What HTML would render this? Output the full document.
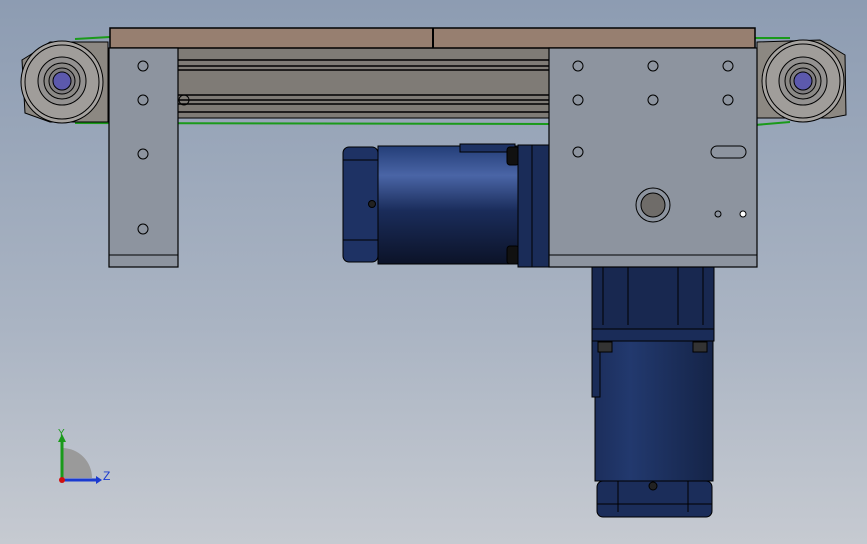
<!DOCTYPE html>
<html><head><style>
html,body{margin:0;padding:0;width:867px;height:544px;overflow:hidden}
body{background:linear-gradient(#8d9cb2,#aab4c3 60%,#c6cad1)}
svg{position:absolute;left:0;top:0}
</style></head><body>
<svg width="867" height="544" viewBox="0 0 867 544">
<defs>
<linearGradient id="mot" x1="0" y1="0" x2="0" y2="1">
<stop offset="0" stop-color="#243e78"/><stop offset="0.25" stop-color="#4a65a6"/><stop offset="0.55" stop-color="#1a2c5a"/><stop offset="1" stop-color="#0c1328"/></linearGradient>
<linearGradient id="mot2" x1="0" y1="0" x2="1" y2="0">
<stop offset="0" stop-color="#1c2e5c"/><stop offset="0.3" stop-color="#22396e"/><stop offset="1" stop-color="#152448"/></linearGradient>
</defs>
<g stroke="#000" stroke-width="1">
<!-- belt green edges -->
<path d="M75 39 L110 37 M75 123 L550 124" stroke="#1a9a1a" stroke-width="2"/>
<path d="M755 38 L790 38 M755 125 L790 122" stroke="#1a9a1a" stroke-width="2"/>
<!-- left pulley housing -->
<path d="M30 55 L50 42 L108 42 L108 122 L50 122 L25 113 L22 60Z" fill="#8c8882"/>
<circle cx="62" cy="82" r="41" fill="#a6a3a0"/>
<circle cx="62" cy="82" r="37" fill="#a09d9a"/>
<circle cx="62" cy="81" r="24" fill="#939190"/>
<circle cx="62" cy="81" r="18" fill="#8a8885"/>
<circle cx="62" cy="81" r="13" fill="#7f7d80"/>
<circle cx="62" cy="81" r="9" fill="#5c59ad"/>
<!-- right pulley housing -->
<path d="M757 42 L820 40 L845 55 L846 115 L830 118 L757 118Z" fill="#8c8882"/>
<circle cx="803" cy="81" r="41" fill="#a6a3a0"/>
<circle cx="803" cy="81" r="37" fill="#a09d9a"/>
<circle cx="803" cy="81" r="24" fill="#939190"/>
<circle cx="803" cy="81" r="18" fill="#8a8885"/>
<circle cx="803" cy="81" r="13" fill="#7f7d80"/>
<circle cx="803" cy="81" r="9" fill="#5c59ad"/>
<!-- rail -->
<rect x="178" y="48" width="372" height="70" fill="#7f7b76"/>
<path d="M178 60 H550 M178 66 H550 M178 70 H550 M178 95 H550 M178 100 H550 M178 104 H550 M178 112 H550" stroke-width="1.5"/>
<!-- top belt -->
<rect x="110" y="28" width="645" height="20" fill="#977f70" stroke-width="1.5"/>
<line x1="433" y1="28" x2="433" y2="48" stroke-width="2"/>
<!-- upper motor -->
<rect x="343" y="147" width="35" height="115" rx="6" fill="#1e3264"/>
<rect x="378" y="146" width="140" height="118" fill="url(#mot)"/>
<rect x="460" y="144" width="55" height="8" fill="#1e3264"/>
<rect x="507" y="147" width="12" height="18" rx="3" fill="#111"/>
<rect x="507" y="246" width="12" height="18" rx="3" fill="#111"/>
<rect x="518" y="145" width="32" height="122" fill="#1a2c58"/>
<line x1="532" y1="145" x2="532" y2="267"/>
<line x1="343" y1="160" x2="378" y2="160"/><line x1="343" y1="240" x2="378" y2="240"/>
<circle cx="372" cy="204" r="3.5" fill="#222"/>
<!-- left plate -->
<rect x="109" y="48" width="69" height="219" fill="#8d949f" stroke-width="1.2"/>
<line x1="109" y1="255" x2="178" y2="255"/>
<g fill="none">
<circle cx="143" cy="66" r="5"/><circle cx="143" cy="100" r="5"/><circle cx="143" cy="154" r="5"/><circle cx="143" cy="229" r="5"/>
<circle cx="184" cy="100" r="5"/>
</g>
<!-- gearbox & lower motor -->
<rect x="592" y="267" width="122" height="62" fill="#182850"/>
<path d="M603 267 V325 M628 267 V325 M678 267 V325 M703 267 V325"/>
<rect x="592" y="329" width="122" height="12" fill="#1a2c58"/>
<rect x="595" y="341" width="118" height="140" fill="url(#mot2)"/>
<rect x="592" y="341" width="8" height="56" fill="#1a2c58"/>
<rect x="598" y="342" width="14" height="10" fill="#333"/><rect x="693" y="342" width="14" height="10" fill="#333"/>
<rect x="597" y="481" width="115" height="36" rx="6" fill="#1b2d5a"/>
<line x1="597" y1="504" x2="712" y2="504"/>
<path d="M618 481 V512 M688 481 V512"/>
<circle cx="653" cy="486" r="4" fill="#222"/>
<!-- right plate -->
<rect x="549" y="48" width="208" height="219" fill="#8d949f" stroke-width="1.2"/>
<line x1="549" y1="255" x2="757" y2="255"/>
<g fill="none">
<circle cx="578" cy="66" r="5"/><circle cx="653" cy="66" r="5"/><circle cx="728" cy="66" r="5"/>
<circle cx="578" cy="100" r="5"/><circle cx="653" cy="100" r="5"/><circle cx="728" cy="100" r="5"/>
<circle cx="578" cy="152" r="5"/>
<rect x="711" y="146" width="35" height="12" rx="6"/>
<circle cx="653" cy="205" r="17"/>
<circle cx="718" cy="214" r="3"/>
</g>
<circle cx="653" cy="205" r="12" fill="#6f6c69"/>
<circle cx="743" cy="214" r="3" fill="#fff"/>
</g>
<!-- axes -->
<g>
<path d="M62 448 A30 30 0 0 1 92 478 L62 478Z" fill="#9a9a9a"/>
<line x1="62" y1="480" x2="62" y2="440" stroke="#1a9a1a" stroke-width="3"/>
<line x1="62" y1="480" x2="96" y2="480" stroke="#1a3ad0" stroke-width="3"/>
<path d="M96 476 L102 480 L96 484Z" fill="#1a3ad0"/>
<path d="M58 442 L62 434 L66 442Z" fill="#1a9a1a"/>
<circle cx="62" cy="480" r="3" fill="#d01010"/>
<text x="58" y="436" font-family="Liberation Sans" font-size="10" fill="#1a9a1a">Y</text>
<text x="103" y="480" font-family="Liberation Sans" font-size="12" fill="#1a3ad0">Z</text>
</g>
</svg>
</body></html>
